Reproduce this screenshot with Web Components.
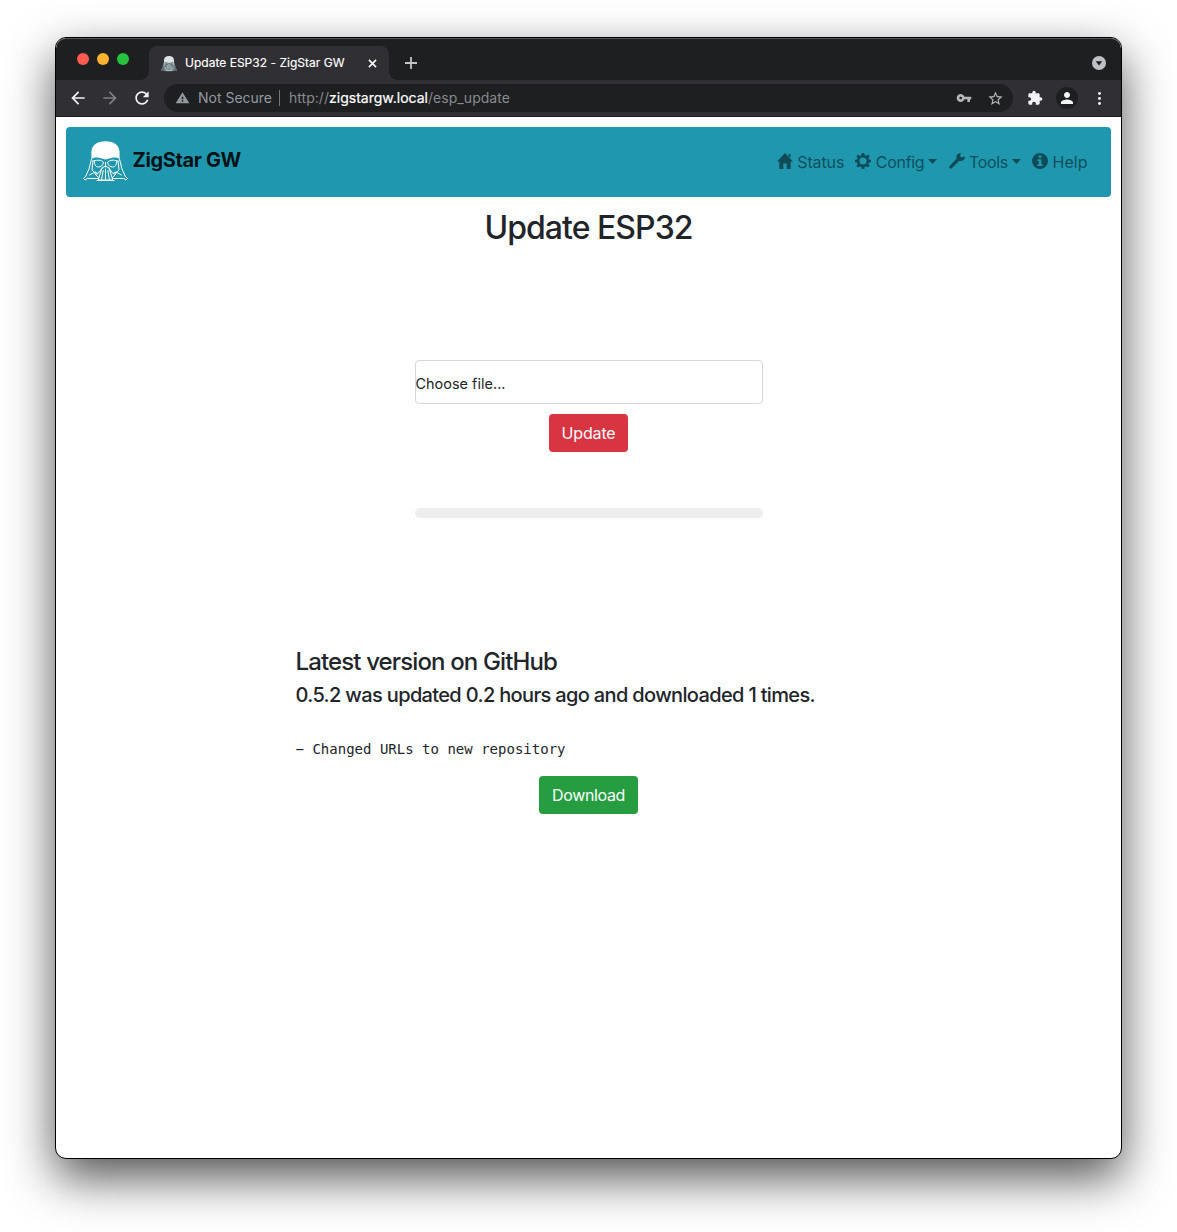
<!DOCTYPE html>
<html lang="en">
<head>
<meta charset="utf-8">
<title>Update ESP32 - ZigStar GW</title>
<style>
html,body{margin:0;height:100%;background:#fff;overflow:hidden}
body{font-family:Inter,"Liberation Sans",sans-serif;color:#212529;display:flex;justify-content:center;align-items:flex-start;font-feature-settings:"calt" 0,"liga" 0}
</style>
</head>
<body>
<browser-window>
  <tab-strip slot="chrome"></tab-strip>
  <tool-bar slot="chrome"></tool-bar>
  <nav-bar></nav-bar>
  <update-form></update-form>
  <release-notes></release-notes>
</browser-window>
<script>
const component = (name, markup) => customElements.define(name, class extends HTMLElement {
  constructor() {
    super();
    this.attachShadow({mode: 'open'}).innerHTML = markup;
  }
});

// Drawing library shared by every toolbar and menu icon: [viewBox, markup]
const ICONS = {
  back: ['0 0 24 24', '<path d="M20 11H7.83l5.59-5.59L12 4l-8 8 8 8 1.41-1.41L7.83 13H20v-2z"/>'],
  forward: ['0 0 24 24', '<path d="M12 4l-1.41 1.41L16.17 11H4v2h12.17l-5.58 5.59L12 20l8-8z"/>'],
  reload: ['0 0 24 24', '<path d="M17.65 6.35C16.2 4.9 14.21 4 12 4c-4.42 0-7.99 3.58-7.99 8s3.57 8 7.99 8c3.73 0 6.84-2.55 7.73-6h-2.08c-.82 2.33-3.04 4-5.65 4-3.31 0-6-2.69-6-6s2.69-6 6-6c1.66 0 3.14.69 4.22 1.78L13 11h7V4l-2.35 2.35z"/>'],
  warning: ['0 0 24 24', '<path d="M1 21h22L12 2 1 21zm12.300-2.500h-2.600v-2.500h2.600v2.500zm0-4.200h-2.600v-4.500h2.600v4.500z"/>'],
  key: ['0 0 24 24', '<path d="M12.65 10C11.83 7.67 9.61 6 7 6c-3.31 0-6 2.69-6 6s2.69 6 6 6c2.61 0 4.83-1.67 5.65-4H17v4h4v-4h2v-4H12.65zM7 14c-1.1 0-2-.9-2-2s.9-2 2-2 2 .9 2 2-.9 2-2 2z"/>'],
  star: ['0 0 24 24', '<path d="M22 9.24l-7.19-.62L12 2 9.19 8.63 2 9.24l5.46 4.73L5.82 21 12 17.27 18.18 21l-1.63-7.03L22 9.24zM12 15.4l-3.76 2.27 1-4.28-3.32-2.88 4.38-.38L12 6.1l1.71 4.04 4.38.38-3.32 2.88 1 4.28L12 15.4z"/>'],
  puzzle: ['0 0 24 24', '<path d="M20.5 11H19V7c0-1.1-.9-2-2-2h-4V3.5C13 2.12 11.88 1 10.5 1S8 2.12 8 3.5V5H4c-1.1 0-1.99.9-1.99 2v3.8H3.5c1.49 0 2.7 1.21 2.7 2.7s-1.21 2.7-2.7 2.7H2V20c0 1.1.9 2 2 2h3.8v-1.5c0-1.49 1.21-2.7 2.7-2.7s2.7 1.21 2.7 2.7V22H17c1.1 0 2-.9 2-2v-4h1.500c1.38 0 2.500-1.120 2.500-2.500S21.880 11 20.500 11z"/>'],
  person: ['0 0 24 24', '<path d="M12 12c2.210 0 4-1.790 4-4s-1.790-4-4-4-4 1.790-4 4 1.790 4 4 4zm0 2c-2.670 0-8 1.340-8 4v2h16v-2c0-2.660-5.330-4-8-4z"/>'],
  more: ['0 0 24 24', '<circle cx="12" cy="4" r="2.300"/><circle cx="12" cy="12" r="2.300"/><circle cx="12" cy="20" r="2.300"/>'],
  close: ['0 0 10 10', '<path d="M1 1l8 8M9 1L1 9" fill="none" stroke="currentColor" stroke-width="1.700"/>'],
  plus: ['0 0 12 12', '<path d="M6 0v12M0 6h12" fill="none" stroke="currentColor" stroke-width="1.800"/>'],
  search: ['0 0 14 14', '<circle cx="7" cy="7" r="7"/><path d="M3.700 5.200h6.600L7 9.600z" fill="#1e1f21"/>'],
  home: ['0 0 16 16', '<path d="M8 0L16 8.600h-2.300V16H9.700v-5.500H6.300V16H2.300V8.600H0zM11.500 1h2v4l-2-2.100z"/>'],
  cog: ['0 0 16 16', '<path fill-rule="evenodd" d="M6.700 0h2.600l.4 2.300 1.400.6L13 1.600l1.600 1.600-1.200 2 .6 1.300 2 .3v2.400l-2 .4-.6 1.400 1.200 1.900-1.700 1.600-1.800-1.200-1.400.6-.4 2.100H6.700l-.4-2.100-1.400-.6-1.800 1.200-1.700-1.600 1.200-1.900L2 9.600l-2-.4V6.800l2-.3.600-1.300-1.200-2L3 1.600l1.900 1.300 1.400-.6zM8 4.400a3.600 3.600 0 1 0 0 7.200 3.600 3.600 0 0 0 0-7.200z"/>'],
  wrench: ['0 0 16 16', '<path d="M15.700 3.300l-3 1.200-1.600-1.300.7-2.900C9.700-.4 7.700 1.200 7.400 3.200c-.1.900.1 1.600.2 2.200L.5 13.200c-.5.600-.5 1.500.1 2.100.6.600 1.500.6 2.100 0l7.400-7.400c.8.200 1.600.3 2.600.1 2.300-.4 3.700-2.600 3-4.700z"/>'],
  info: ['0 0 16 16', '<path fill-rule="evenodd" d="M8 0a8 8 0 1 0 0 16A8 8 0 0 0 8 0zM6.700 2.500h2.700v2.300H6.700zM5.500 6.300h3.900v5h1.300v1.800H5.500v-1.800h1.300V8.100H5.500z"/>'],
  caret: ['0 0 10 5', '<path d="M0 0h10L5 5z"/>'],
  helmet: ['0 0 45 40', `
    <path d="M8.400 18.500V11C8.800 4 14 .3 22.500 .3S36.200 4 36.600 11v7.500c-1.500-2-3.600-2.300-6.600-2l-7.500 2-7.500-2c-3-.3-5.100 0-6.600 2z"/>
    <g fill="none" stroke="currentColor" stroke-width="1" stroke-linejoin="round" stroke-linecap="round">
      <path d="M8.400 18.500L6 28 2.600 35.500M36.600 18.500L39 28l3.400 7.500M2.600 35.500l-2 1.800 1.500 1.800 2.200-1.600H15M42.400 35.500l2 1.800-1.500 1.800-2.200-1.600H30"/>
      <path d="M11.200 20c3-1.500 7-1 9.300 1.200-.6 3.500-2.800 4.800-5.300 4.800s-4-2.500-4-6zM33.800 20c-3-1.500-7-1-9.300 1.200.6 3.500 2.800 4.800 5.300 4.800s4-2.500 4-6z"/>
      <path d="M10 19.500L9 29l5 4.500M35 19.500l1 9.500-5 4.500M6.500 34l5.500-3 3 1.500 4-5M38.500 34L33 31l-3 1.500-4-5"/>
      <path d="M22.500 21.500v4.500M19 27l3.500-2 3.500 2M19 27l-3.800 12h14.600L26 27M20.200 29.500L18.500 39M22.500 28v11M24.800 29.500L26.500 39M14 39.500h17M15.500 36.500L12 33M29.500 36.500L33 33"/>
    </g>`]
};

class UiIcon extends HTMLElement {
  connectedCallback() {
    if (this.shadowRoot) return;
    const [box, art] = ICONS[this.getAttribute('name')];
    const w = this.getAttribute('w'), h = this.getAttribute('h') || w;
    this.attachShadow({mode: 'open'}).innerHTML =
      `<style>:host{display:block;flex:none;width:${w}px;height:${h}px}svg{display:block;width:100%;height:100%;fill:currentColor;overflow:visible}</style>
       <svg viewBox="${box}" preserveAspectRatio="none" aria-hidden="true">${art}</svg>`;
  }
}

// A single line of text tracked so that it spans the given number of pixels
class TextRun extends HTMLElement {
  connectedCallback() {
    if (this.shadowRoot) return;
    this.attachShadow({mode: 'open'}).innerHTML =
      '<style>:host{display:inline-block;white-space:pre;flex:none}</style><slot></slot>';
    const target = parseFloat(this.getAttribute('span'));
    const natural = this.getBoundingClientRect().width;
    this.style.letterSpacing = ((target - natural) / this.textContent.length).toFixed(4) + 'px';
  }
}

component('browser-window', `
<style>
:host{display:block;box-sizing:border-box;width:1067px;height:1122px;margin-top:37px;border:1px solid #000;border-radius:11px;background:#fff;box-shadow:0 19px 48px rgba(0,0,0,.68)}
.clip{border-radius:10px;overflow:hidden;height:100%}
main{padding:10px}
</style>
<div class="clip"><slot name="chrome"></slot><main><slot></slot></main></div>`);

component('tab-strip', `
<style>
:host{display:flex;box-sizing:border-box;height:42px;background:#1e1f21;box-shadow:inset 0 1px #55575a;border-radius:10px 10px 0 0;align-items:flex-end;color:#fff}
.lights{display:flex;gap:8px;padding:0 20px 15px 21px}
i{width:12px;height:12px;border-radius:50%;background:#ff5a52}
i:nth-child(2){background:#fdb32f}i:nth-child(3){background:#27c33f}
.foot{width:8px;height:8px;background:radial-gradient(circle at 0 0,#1e1f21 7.500px,#302f33 8px);margin-left:-8px}
.foot.r{background:radial-gradient(circle at 100% 0,#1e1f21 7.500px,#302f33 8px);margin:0}
.tab{display:flex;align-items:center;box-sizing:border-box;width:240px;height:34px;background:#302f33;border-radius:8px 8px 0 0;padding:0 12px;font-size:12px;line-height:18px}
.tab text-run{margin-left:8px;-webkit-text-stroke:.15px #fff}
.fav{color:#dce3e5;background:radial-gradient(ellipse at 50% 80%,#5b727a 40%,transparent 62%)}
.close{margin-left:auto}
.plus{margin:0 0 11px 8px;color:#c3c5c9}
.search{margin:0 15px 10px auto;color:#bdc1c6}
</style>
<div class="lights"><i></i><i></i><i></i></div>
<div class="foot"></div>
<div class="tab"><ui-icon class="fav" name="helmet" w="16" h="15"></ui-icon><text-run span="159.500">Update ESP32 - ZigStar GW</text-run><ui-icon class="close" name="close" w="9"></ui-icon></div>
<div class="foot r"></div>
<ui-icon class="plus" name="plus" w="12"></ui-icon>
<ui-icon class="search" name="search" w="14"></ui-icon>`);

component('tool-bar', `
<style>
:host{display:flex;box-sizing:border-box;height:37px;background:#302f33;border-bottom:1px solid #1b1b1d;align-items:center;color:#f1f3f4;padding:0 12px;font-size:14px;line-height:20px}
.fwd{color:#7d7e82;margin:0 12px}
.omni{display:flex;flex:none;align-items:center;box-sizing:border-box;width:849px;height:28px;border-radius:14px;background:#1e1f21;margin-left:12px;padding:0 9px 0 11px;color:#9299a1}
.omni>text-run{margin-left:8px}
.bar{width:1px;height:16px;background:#73777c;margin:0 9px 0 7px}
.url{display:flex;color:#888b8f}
b{font-weight:400;color:#fff;-webkit-text-stroke:.2px #fff}
.key{margin-left:auto;color:#b5b5b5}.star{margin-left:15px;color:#b5b5b5}
.ext{margin-left:14px}
.me{display:flex;flex:none;align-items:center;justify-content:center;width:22px;height:22px;border-radius:50%;background:#1e1f21;margin-left:13px}
.more{margin-left:14px}
</style>
<ui-icon name="back" w="20"></ui-icon><ui-icon class="fwd" name="forward" w="20"></ui-icon><ui-icon name="reload" w="20"></ui-icon>
<div class="omni"><ui-icon name="warning" w="15" h="14"></ui-icon><text-run span="74">Not Secure</text-run><span class="bar"></span>
<div class="url"><text-run span="40">http://</text-run><b><text-run span="99">zigstargw.local</text-run></b><text-run span="82">/esp_update</text-run></div>
<ui-icon class="key" name="key" w="16"></ui-icon><ui-icon class="star" name="star" w="17"></ui-icon></div>
<ui-icon class="ext" name="puzzle" w="16"></ui-icon>
<span class="me"><ui-icon name="person" w="18"></ui-icon></span>
<ui-icon class="more" name="more" w="15"></ui-icon>`);

component('nav-item', `
<style>
:host{display:flex;align-items:center;color:rgba(0,0,0,.5)}
.label{margin-left:4.400px}
</style>
<slot name="icon"></slot><span class="label"><slot></slot></span><slot name="caret"></slot>`);

component('nav-bar', `
<style>
:host{display:flex;box-sizing:border-box;height:70px;border-radius:4px;background:#1e97af;justify-content:space-between;padding:13px 23.500px 0 17px}
.brand{display:flex;align-items:flex-start;color:rgba(0,0,0,.9);font-size:20px;font-weight:700;line-height:30px}
.brand ui-icon{color:#fff;margin-top:1px}
.brand text-run{margin:5px 0 0 4.500px}
nav{display:flex;gap:11.200px;font-size:16px;line-height:24px;height:24px;margin-top:10px}
[slot=icon]{margin-top:-2px}
[slot=caret]{margin:-1px 0 0 4px}
</style>
<div class="brand"><ui-icon name="helmet" w="45" h="40"></ui-icon><text-run span="108.500">ZigStar GW</text-run></div>
<nav>
<nav-item><ui-icon slot="icon" name="home" w="16"></ui-icon><text-run span="47">Status</text-run></nav-item>
<nav-item><ui-icon slot="icon" name="cog" w="16"></ui-icon><text-run span="48.500">Config</text-run><ui-icon slot="caret" name="caret" w="9" h="5"></ui-icon></nav-item>
<nav-item><ui-icon slot="icon" name="wrench" w="16"></ui-icon><text-run span="39">Tools</text-run><ui-icon slot="caret" name="caret" w="9" h="5"></ui-icon></nav-item>
<nav-item><ui-icon slot="icon" name="info" w="16"></ui-icon><text-run span="35">Help</text-run></nav-item>
</nav>`);

component('action-button', `
<style>
:host{display:flex;box-sizing:border-box;height:38px;border-radius:4px;justify-content:center;align-items:center;color:#fff;font-size:16px;line-height:24px}
</style><slot></slot>`);

component('update-form', `
<style>
:host{display:flex;flex-direction:column;align-items:center}
h2{margin:11px 0 113px;font-size:32px;font-weight:500;line-height:39px;height:39px}
.file{box-sizing:border-box;width:348px;height:44px;border:1px solid #d6d7d8;border-radius:4px;font-size:14.400px;line-height:22px;padding-top:12px;margin-bottom:10px}
action-button{width:79px;background:#d93442}
.track{width:348px;height:10px;border-radius:5px;background:#eee;margin-top:56px}
</style>
<h2><text-run span="208">Update ESP32</text-run></h2>
<div class="file"><text-run span="90">Choose file...</text-run></div>
<action-button><text-run span="54">Update</text-run></action-button>
<div class="track"></div>`);

component('release-notes', `
<style>
:host{display:flex;flex-direction:column;align-items:flex-start;width:586px;margin:129px auto 0}
h4,h5,pre{margin:0;font-weight:500}
h4{font-size:24px;line-height:29px;height:29px;margin-bottom:7px}
h5{font-size:20px;line-height:24px;height:24px;margin-bottom:32px}
pre{font:14px/20px "DejaVu Sans Mono",monospace;height:20px;margin-bottom:17px}
action-button{align-self:center;width:99px;background:#259d40}
</style>
<h4><text-run span="261.500">Latest version on GitHub</text-run></h4>
<h5><text-run span="519.500">0.5.2 was updated 0.2 hours ago and downloaded 1 times.</text-run></h5>
<pre><text-run span="270">− Changed URLs to new repository</text-run></pre>
<action-button><text-run span="73">Download</text-run></action-button>`);

customElements.define('ui-icon', UiIcon);
customElements.define('text-run', TextRun);
</script>
</body>
</html>
